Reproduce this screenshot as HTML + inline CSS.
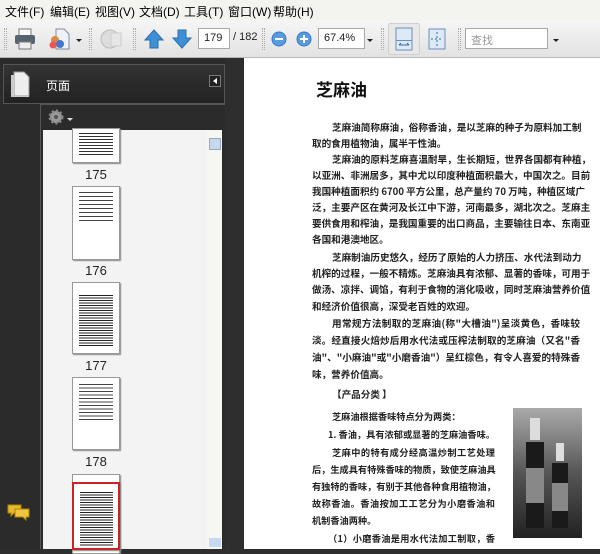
<!DOCTYPE html>
<html><head><meta charset="utf-8"><style>
*{margin:0;padding:0;box-sizing:border-box}
body{width:600px;height:549px;overflow:hidden;position:relative;background:#2e2e2e;font-family:"Liberation Sans","Noto Sans CJK SC",sans-serif}
.abs{position:absolute}
#menu{left:0;top:0;width:600px;height:20px;background:#f3f3f0;font-size:12px;color:#000}
#menu span{position:absolute;top:3px}
#tb{left:0;top:20px;width:600px;height:38px;background:linear-gradient(#f6f6f6,#e2e2e2);border-bottom:1px solid #b8b8b8}
.sep{position:absolute;top:8px;width:3px;height:22px;border-left:1px dotted #aaa;border-right:1px dotted #aaa}
.inp{position:absolute;background:#fff;border:1px solid #a8a8a8;font-size:11px;color:#222;padding:3px 0 0 5px;height:21px}
.dd{position:absolute;width:0;height:0;border-left:3px solid transparent;border-right:3px solid transparent;border-top:3px solid #222}
#left{left:0;top:58px;width:225px;height:491px;background:#2b2b2b}
#hdr{left:3px;top:6px;width:222px;height:40px;border:1px solid #555;background:linear-gradient(#333,#222)}
#thumbs{left:43px;top:72px;width:179px;height:419px;background:#f3f3f3}
#scroll{left:164px;top:0;width:15px;height:419px;background:#f7f7f2}
.th{position:absolute;left:29px;width:48px;background:#fff;border:1px solid #999;box-shadow:1px 1px 1px #888}
.lbl{position:absolute;left:29px;width:48px;text-align:center;font-size:13px;color:#222}
.tl{position:absolute;height:2px;background:#333}
#page{left:244px;top:58px;width:356px;height:491px;background:#fff;overflow:hidden}
.ln{position:absolute;left:68px;width:268px;font-size:9.6px;line-height:14px;color:#222;white-space:nowrap;text-align:justify;text-align-last:justify;font-weight:bold;font-family:"Noto Sans CJK SC",sans-serif}
.ln.i{left:88px;width:248px}
.ln.s{width:183px;font-size:9.2px}
.ln.si{left:88px;width:163px;font-size:9.2px}
</style></head><body>
<div id="menu" class="abs">
<span style="left:5px">文件(F)</span><span style="left:50px">编辑(E)</span><span style="left:95px">视图(V)</span><span style="left:139px">文档(D)</span><span style="left:184px">工具(T)</span><span style="left:228px">窗口(W)</span><span style="left:273px">帮助(H)</span>
</div>
<div id="tb" class="abs">
<div class="sep" style="left:4px"></div>
<svg class="abs" style="left:14px;top:8px" width="22" height="22"><rect x="5" y="1" width="12" height="7" fill="#fff" stroke="#777"/><rect x="1" y="7" width="20" height="9" rx="2" fill="#5a6470"/><rect x="5" y="14" width="12" height="7" fill="#eee" stroke="#777"/></svg>
<svg class="abs" style="left:48px;top:7px" width="24" height="24"><path d="M8 2h8l5 5v15H8z" fill="#eef2f8" stroke="#889"/><circle cx="7" cy="13" r="4" fill="#d84"/><circle cx="12" cy="17" r="4" fill="#47c"/><circle cx="5" cy="18" r="3.5" fill="#e55"/></svg>
<div class="dd" style="left:76px;top:19px"></div>
<div class="sep" style="left:89px"></div>
<svg class="abs" style="left:99px;top:7px" width="26" height="24"><circle cx="11" cy="12" r="9" fill="#ddd" stroke="#bbb"/><rect x="12" y="6" width="10" height="13" fill="#e6e6e6" stroke="#ccc"/></svg>
<div class="sep" style="left:133px"></div>
<svg class="abs" style="left:143px;top:8px" width="22" height="22"><path d="M11 2L20 12H15V20H7V12H2z" fill="#3d8fd6" stroke="#2a6ca8"/></svg>
<svg class="abs" style="left:171px;top:8px" width="22" height="22"><path d="M11 20L20 10H15V2H7V10H2z" fill="#3d8fd6" stroke="#2a6ca8"/></svg>
<div class="inp" style="left:198px;top:8px;width:32px">179</div>
<span class="abs" style="left:233px;top:11px;font-size:11px;color:#222">/ 182</span>
<div class="sep" style="left:262px"></div>
<svg class="abs" style="left:270px;top:10px" width="18" height="18"><circle cx="9" cy="9" r="7" fill="#5a9be0" stroke="#37c"/><rect x="5" y="8" width="8" height="2" fill="#fff"/></svg>
<svg class="abs" style="left:295px;top:10px" width="18" height="18"><circle cx="9" cy="9" r="7" fill="#5a9be0" stroke="#37c"/><rect x="5" y="8" width="8" height="2" fill="#fff"/><rect x="8" y="5" width="2" height="8" fill="#fff"/></svg>
<div class="inp" style="left:318px;top:8px;width:47px">67.4%</div>
<div class="dd" style="left:367px;top:19px"></div>
<div class="sep" style="left:381px"></div>
<div class="abs" style="left:388px;top:3px;width:32px;height:32px;background:#e8e8e8;border:1px solid #d0d0d0;border-radius:2px"></div>
<svg class="abs" style="left:394px;top:7px" width="20" height="24"><rect x="2" y="1" width="16" height="22" fill="#dde9f5" stroke="#6a8fb8"/><rect x="2" y="13" width="16" height="1" fill="#6a8fb8"/><path d="M5 18h10M5 18l2-2M15 18l-2-2" stroke="#2a6ca8"/></svg>
<svg class="abs" style="left:427px;top:8px" width="20" height="22"><rect x="2" y="1" width="16" height="20" fill="#dde9f5" stroke="#6a8fb8"/><path d="M10 4v14M4 11h12" stroke="#2a6ca8" stroke-dasharray="2 2"/></svg>
<div class="sep" style="left:458px"></div>
<div class="inp" style="left:465px;top:8px;width:83px;color:#999">查找</div>
<div class="dd" style="left:553px;top:19px"></div>
</div>
<div id="left" class="abs">
<div id="hdr" class="abs">
<svg class="abs" style="left:5px;top:5px" width="22" height="28"><path d="M5 2h10l5 5v19H5z" fill="#eee" stroke="#999"/><path d="M2 5h3v21h15v1H2z" fill="#ccc"/></svg>
<span class="abs" style="left:42px;top:12px;color:#fff;font-size:12px">页面</span>
<div class="abs" style="left:205px;top:10px;width:12px;height:12px;border:1px solid #777;background:#222"><div class="abs" style="left:3px;top:2px;border-right:4px solid #fff;border-top:3px solid transparent;border-bottom:3px solid transparent"></div></div>
</div>
<div class="abs" style="left:40px;top:46px;width:1px;height:445px;background:#555"></div>
<div class="abs" style="left:40px;top:46px;width:185px;height:1px;background:#555"></div>
<svg class="abs" style="left:46px;top:49px" width="20" height="20"><circle cx="10" cy="10" r="6" fill="#999" stroke="#888" stroke-width="3" stroke-dasharray="2 2"/><circle cx="10" cy="10" r="2" fill="#555"/></svg>
<div class="dd" style="left:67px;top:60px;border-top-color:#ddd"></div>
<div id="thumbs" class="abs">
<div id="scroll" class="abs"><div class="abs" style="left:2px;top:8px;width:12px;height:12px;background:#c8d8f2;border:1px solid #9ab"></div><div class="abs" style="left:2px;top:408px;width:12px;height:9px;background:#c8d8f2"></div></div>
<div class="th" style="top:-2px;height:35px"><div class="tl" style="left:6px;top:4px;width:34px;height:24px;background:repeating-linear-gradient(#333 0 1px,#fff 1px 3px)"></div></div>
<div class="lbl" style="top:37px">175</div>
<div class="th" style="top:56px;height:74px"><div class="tl" style="left:6px;top:5px;width:34px;height:30px;background:repeating-linear-gradient(#444 0 1px,#fff 1px 4px)"></div></div>
<div class="lbl" style="top:133px">176</div>
<div class="th" style="top:152px;height:72px"><div class="tl" style="left:6px;top:12px;width:34px;height:52px;background:repeating-linear-gradient(#222 0 1px,#fff 1px 2.5px)"></div></div>
<div class="lbl" style="top:228px">177</div>
<div class="th" style="top:247px;height:73px"><div class="tl" style="left:6px;top:6px;width:34px;height:36px;background:repeating-linear-gradient(#444 0 1px,#fff 1px 3.5px)"></div></div>
<div class="lbl" style="top:324px">178</div>
<div class="th" style="top:344px;height:80px"></div>
<div class="th" style="top:352px;height:68px;border:2px solid #c22"><div class="tl" style="left:6px;top:8px;width:33px;height:54px;background:repeating-linear-gradient(#222 0 1px,#fff 1px 2.5px)"></div></div>
</div>
<svg class="abs" style="left:7px;top:444px" width="24" height="22"><path d="M1 3h13v8H7l-3 3v-3H1z" fill="#e8b830" stroke="#a80"/><path d="M8 7h14v8h-3v3l-3-3H8z" fill="#f0c540" stroke="#a80"/></svg>
</div>
<div id="page" class="abs">
<div class="abs" style="left:72px;top:18px;font-size:17px;font-weight:bold;color:#111;font-family:'Noto Sans CJK SC',sans-serif">芝麻油</div>
<div class="ln i" style="top:62px">芝麻油简称麻油，俗称香油，是以芝麻的种子为原料加工制</div>
<div class="ln" style="top:78px;text-align-last:left">取的食用植物油，属半干性油。</div>
<div class="ln i" style="top:94px">芝麻油的原料芝麻喜温耐旱，生长期短，世界各国都有种植，</div>
<div class="ln" style="top:110px">以亚洲、非洲居多，其中尤以印度种植面积最大，中国次之。目前</div>
<div class="ln" style="top:126px">我国种植面积约 6700 平方公里，总产量约 70 万吨，种植区域广</div>
<div class="ln" style="top:142px">泛，主要产区在黄河及长江中下游，河南最多，湖北次之。芝麻主</div>
<div class="ln" style="top:158px">要供食用和榨油，是我国重要的出口商品，主要输往日本、东南亚</div>
<div class="ln" style="top:174px;text-align-last:left">各国和港澳地区。</div>
<div class="ln i" style="top:192px">芝麻制油历史悠久，经历了原始的人力挤压、水代法到动力</div>
<div class="ln" style="top:208px">机榨的过程，一般不精炼。芝麻油具有浓郁、显著的香味，可用于</div>
<div class="ln" style="top:224px">做汤、凉拌、调馅，有利于食物的消化吸收，同时芝麻油营养价值</div>
<div class="ln" style="top:241px;text-align-last:left">和经济价值很高，深受老百姓的欢迎。</div>
<div class="ln i" style="top:258px">用常规方法制取的芝麻油(称"大槽油")呈淡黄色，香味较</div>
<div class="ln" style="top:275px">淡。经直接火焙炒后用水代法或压榨法制取的芝麻油（又名"香</div>
<div class="ln" style="top:292px">油"、"小麻油"或"小磨香油"）呈红棕色，有令人喜爱的特殊香</div>
<div class="ln" style="top:309px;text-align-last:left">味，营养价值高。</div>
<div class="ln" style="top:329px;left:88px;text-align-last:left">【产品分类 】</div>
<div class="ln si" style="top:351px;text-align-last:left">芝麻油根据香味特点分为两类：</div>
<div class="ln si" style="top:369px;left:84px;width:167px">1. 香油，具有浓郁或显著的芝麻油香味。</div>
<div class="ln si" style="top:387px">芝麻中的特有成分经高温炒制工艺处理</div>
<div class="ln s" style="top:404px">后，生成具有特殊香味的物质，致使芝麻油具</div>
<div class="ln s" style="top:421px">有独特的香味，有别于其他各种食用植物油，</div>
<div class="ln s" style="top:438px">故称香油。香油按加工工艺分为小磨香油和</div>
<div class="ln s" style="top:455px;text-align-last:left">机制香油两种。</div>
<div class="ln si" style="top:473px;left:84px;width:167px">（1）小磨香油是用水代法加工制取，香</div>
<svg class="abs" style="left:269px;top:350px" width="69" height="130"><defs><linearGradient id="g" x1="0" y1="0" x2="0" y2="1"><stop offset="0" stop-color="#aaa"/><stop offset=".5" stop-color="#555"/><stop offset="1" stop-color="#222"/></linearGradient></defs><rect width="69" height="130" fill="url(#g)"/><rect x="17" y="10" width="10" height="22" fill="#ddd"/><path d="M13 34h18v86H13z" fill="#1a1a1a"/><rect x="13" y="60" width="18" height="35" fill="#888"/><rect x="43" y="35" width="8" height="18" fill="#ddd"/><path d="M39 55h16v65H39z" fill="#1a1a1a"/><rect x="39" y="75" width="16" height="28" fill="#888"/></svg>
</div>
</body></html>
